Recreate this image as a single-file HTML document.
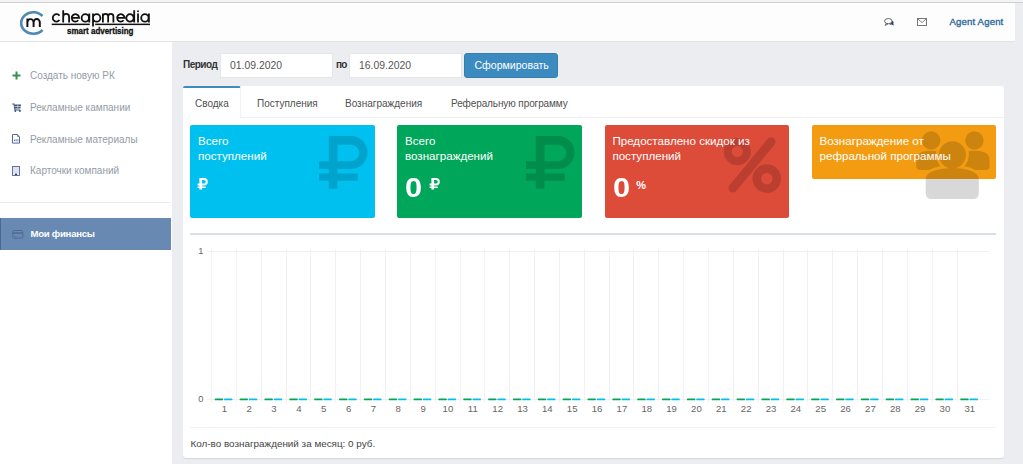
<!DOCTYPE html>
<html><head><meta charset="utf-8">
<style>
*{margin:0;padding:0;box-sizing:border-box}
html,body{width:1023px;height:464px;overflow:hidden;background:#ecedf0;font-family:"Liberation Sans",sans-serif;position:relative}
.a{position:absolute;white-space:nowrap;line-height:1}
#topstrip{position:absolute;left:0;top:0;width:1023px;height:3px;background:#f3f3f3;border-bottom:1px solid #d0d0d0}
#header{position:absolute;left:0;top:3px;width:1015px;height:39px;background:#fdfdfd;border-bottom:1px solid #e2e2e4}
#sidebar{position:absolute;left:0;top:42px;width:172px;height:422px;background:#fff}
.nav{font-size:10px;color:#939ca7}
#active{position:absolute;left:0;top:218px;width:171px;height:32px;background:#6889b2;border-left:1px solid #4a6892}
#sep{position:absolute;left:0;top:202px;width:171px;height:1px;background:#ececec}
.lbl{font-size:9.3px;font-weight:bold;color:#333}
.inp{position:absolute;top:53px;height:25px;background:#fff;border:1px solid #e6e6e6}
.inp span{position:absolute;left:9px;top:7.2px;font-size:10.4px;color:#555;line-height:1}
#btn{position:absolute;left:464px;top:53px;width:94px;height:25px;background:#3c8bc0;border-radius:3px;border:1px solid #367fa9}
#panel{position:absolute;left:183px;top:86px;width:821px;height:372px;background:#fff;border-radius:3px;box-shadow:0 1px 1px rgba(0,0,0,0.1)}
#tabbar{position:absolute;left:183px;top:86px;width:821px;height:32px;border-bottom:1px solid #f0f0f0}
#acttab{position:absolute;left:183px;top:86px;width:58px;height:32px;background:#fff;border-top:2px solid #3c8dbc;border-right:1px solid #f2f2f2;border-radius:2px 2px 0 0}
.tab{font-size:10px;color:#505050}
.box{position:absolute;top:125px;width:185px;height:93px;border-radius:2px;overflow:hidden}
.box .t{position:absolute;left:8px;top:8.1px;font-size:11.6px;line-height:15.3px;color:#fff;white-space:nowrap}
.box svg.ic{position:absolute;left:0;top:0}
.big{position:absolute;font-size:27px;font-weight:bold;color:#fff;line-height:1;transform:scaleX(1.12);transform-origin:0 0}
#chart{position:absolute;left:190px;top:233px;width:806px;height:194px;border-top:2px solid #d9dde4;border-radius:1px;box-shadow:0 1px 1px rgba(0,0,0,0.06)}
</style></head><body>
<div id="topstrip"></div>
<div id="header"></div>
<!-- logo -->
<svg class="a" style="left:0;top:0" width="170" height="42" viewBox="0 0 170 42">
  <path d="M42.5 16 A12.09 10.8 0 1 0 42.5 30" fill="none" stroke="#4f8ab3" stroke-width="2.6"/>
  <path d="M27.4 18.6 V27.1 M27.4 22.4 A3.1 3.3 0 0 1 33.6 22.4 V27.1 M33.6 22.4 A3.1 3.3 0 0 1 39.8 22.4 V27.1" fill="none" stroke="#111" stroke-width="1.95"/>
  <path d="M59.49 15.73 A3.7 3.7 0 1 0 59.49 20.07 M63.2 10.2 V22.4 M63.2 22.4 V17 A2.95 3.05 0 0 1 69.1 17 V22.4 M71.70 17.9 H79.10 A3.7 3.7 0 1 0 78.23 20.28 M81.60 17.9 A3.7 3.7 0 1 0 89.00 17.9 A3.7 3.7 0 1 0 81.60 17.9 M89.30 13.4 V22.4 M93 13.4 V26.6 M93 17.9 A3.7 3.7 0 1 1 100.40 17.9 A3.7 3.7 0 1 1 93 17.9 M102.9 13.4 V22.4 M102.9 16.3 A2.63 2.65 0 0 1 108.15 16.3 V22.4 M108.15 16.3 A2.63 2.65 0 0 1 113.4 16.3 V22.4 M117.10 17.9 H124.50 A3.7 3.7 0 1 0 123.63 20.28 M126.30 17.9 A3.7 3.7 0 1 0 133.70 17.9 A3.7 3.7 0 1 0 126.30 17.9 M134.2 10.2 V22.4 M138 13.4 V22.4 M141.20 17.9 A3.7 3.7 0 1 0 148.60 17.9 A3.7 3.7 0 1 0 141.20 17.9 M148.90 13.4 V22.4" fill="none" stroke="#111" stroke-width="1.8"/>
  <circle cx="138" cy="11.3" r="0.95" fill="#111"/>
  <rect x="51.7" y="23.6" width="38.1" height="1.5" fill="#111"/><rect x="95.2" y="23.6" width="54.8" height="1.5" fill="#111"/>
  <text x="67" y="33.6" font-family="Liberation Sans" font-weight="bold" font-size="8.3" fill="#111" stroke="#111" stroke-width="0.3" textLength="66.5" lengthAdjust="spacingAndGlyphs">smart advertising</text>
</svg>
<!-- header right -->
<svg class="a" style="left:884px;top:18px" width="10" height="8" viewBox="0 0 10 8">
  <ellipse cx="4.3" cy="3.1" rx="3.7" ry="2.6" fill="none" stroke="#5a5a5a" stroke-width="0.9"/>
  <path d="M2.2 5.4 L1.2 7.4 L4 6" fill="none" stroke="#5a5a5a" stroke-width="0.9"/>
  <path d="M8.3 2.8 C9.6 3.4 10 4.6 9.3 5.6 L9.8 7.6 L7.5 6.6 C6.8 6.8 5.6 6.6 5 6.1 C7 5.8 8.4 4.6 8.3 2.8 Z" fill="#2e3f5e"/>
</svg>
<svg class="a" style="left:917px;top:18px" width="10" height="8" viewBox="0 0 10 8">
  <rect x="0.5" y="0.5" width="9" height="7" fill="none" stroke="#777" stroke-width="1"/>
  <path d="M0.8 0.9 L5 4.6 L9.2 0.9" fill="none" stroke="#777" stroke-width="0.9"/>
</svg>
<div class="a" style="left:949.5px;top:16.6px;font-size:9.6px;color:#2d6b98;-webkit-text-stroke:0.35px #2d6b98;letter-spacing:0.15px">Agent Agent</div>

<!-- sidebar -->
<div id="sidebar"></div>
<svg class="a" style="left:12px;top:71px" width="9" height="9" viewBox="0 0 9 9"><path d="M4.5 0.5V8.5M0.5 4.5H8.5" stroke="#349147" stroke-width="2"/></svg>
<div class="a nav" style="left:30px;top:71px">Создать новую РК</div>
<svg class="a" style="left:12px;top:103px" width="10" height="9" viewBox="0 0 10 9">
  <path d="M0.2 1 H2 L3 7 H8.3" fill="none" stroke="#3b5579" stroke-width="1.1"/>
  <path d="M2.4 1.6 H9 L8.4 5.4 H3 Z" fill="#3b5579"/>
  <path d="M5.8 1.6 V5.4 M2.6 3.5 H8.9" stroke="#dfe6ee" stroke-width="0.7"/>
  <circle cx="3.3" cy="8" r="0.95" fill="#3b5579"/><circle cx="7.9" cy="8" r="0.95" fill="#3b5579"/>
</svg>
<div class="a nav" style="left:30px;top:102.5px">Рекламные кампании</div>
<svg class="a" style="left:12px;top:134px" width="8" height="10" viewBox="0 0 8 10">
  <path d="M0.5 0.5 H5.2 L7.5 2.8 V9.1 H0.5 Z" fill="none" stroke="#56679a" stroke-width="1"/>
  <path d="M5.2 0.5 V2.8 H7.5 Z" fill="#56679a"/>
  <path d="M1.8 6.3 L3.2 5.3 V7.3 Z" fill="#26456f"/>
  <rect x="3.6" y="5.2" width="3" height="2.2" fill="#9fb3cf"/>
</svg>
<div class="a nav" style="left:30px;top:134.5px">Рекламные материалы</div>
<svg class="a" style="left:12px;top:166px" width="8" height="10" viewBox="0 0 8 10">
  <rect x="0.5" y="0.5" width="7" height="9" fill="#dfe2ea" stroke="#6676a4" stroke-width="1"/>
  <rect x="1" y="7.6" width="6" height="1.4" fill="#fff"/>
  <ellipse cx="4" cy="8.4" rx="1.4" ry="0.8" fill="#2c4a7a"/>
</svg>
<div class="a nav" style="left:30px;top:166px">Карточки компаний</div>
<div id="sep"></div>
<div id="active"></div>
<svg class="a" style="left:12px;top:230px" width="12" height="9" viewBox="0 0 12 9">
  <rect x="0.8" y="0.5" width="10" height="7.6" rx="1" fill="none" stroke="#4d6b94" stroke-width="1"/>
  <rect x="0.8" y="2.3" width="10" height="1.5" fill="#4d6b94"/>
  <rect x="2" y="6" width="2.4" height="0.8" fill="#56759e"/>
</svg>
<div class="a" style="left:30.4px;top:228.9px;font-size:9.6px;font-weight:bold;color:#fff;letter-spacing:-0.25px">Мои финансы</div>

<!-- form -->
<div class="a lbl" style="left:183px;top:59.8px;font-size:10px;letter-spacing:-0.5px">Период</div>
<div class="inp" style="left:220px;width:113px"><span>01.09.2020</span></div>
<div class="a lbl" style="left:336px;top:59.8px;font-size:10px;letter-spacing:-0.9px">по</div>
<div class="inp" style="left:349px;width:113px"><span>16.09.2020</span></div>
<div id="btn"></div>
<div class="a" style="left:474.5px;top:59.5px;font-size:10.55px;color:#fff">Сформировать</div>

<!-- panel -->
<div id="panel"></div>
<div id="tabbar"></div>
<div id="acttab"></div>
<div class="a tab" style="left:195px;top:99px">Сводка</div>
<div class="a tab" style="left:257px;top:99px">Поступления</div>
<div class="a tab" style="left:345px;top:99px">Вознаграждения</div>
<div class="a tab" style="left:451px;top:99px;letter-spacing:-0.1px">Реферальную программу</div>

<!-- boxes -->
<div class="box" style="left:190px;background:#00c0ef">
  <svg class="ic" width="185" height="93" viewBox="0 0 185 93"><path fill="rgba(0,0,0,0.15)" d="M138.8 11 H161 A16.5 16.5 0 0 1 161 44 H147.5 V48.5 H167.8 V55.7 H147.5 V63.8 H138.8 V55.7 H129 V48.5 H138.8 V44 H129 V36.3 H138.8 Z M147.5 19.7 V36.3 H161 A8.3 8.3 0 0 0 161 19.7 Z"/></svg>
  <div class="t">Всего<br>поступлений</div>
  <svg class="ic" style="left:7.2px;top:52.5px" width="12" height="12" viewBox="0 0 12 12"><path fill="#fff" d="M2.4 0 H7 A3.75 3.75 0 0 1 7 7.5 H5.1 V8.4 H8.8 V10.1 H5.1 V11.6 H2.4 V10.1 H0.6 V8.4 H2.4 V7.5 H0.6 V5.6 H2.4 Z M5.1 1.9 V5.6 H6.9 A1.85 1.85 0 0 0 6.9 1.9 Z"/></svg>
</div>
<div class="box" style="left:397px;background:#00a65a">
  <svg class="ic" width="185" height="93" viewBox="0 0 185 93"><path fill="rgba(0,0,0,0.15)" d="M138.8 11 H161 A16.5 16.5 0 0 1 161 44 H147.5 V48.5 H167.8 V55.7 H147.5 V63.8 H138.8 V55.7 H129 V48.5 H138.8 V44 H129 V36.3 H138.8 Z M147.5 19.7 V36.3 H161 A8.3 8.3 0 0 0 161 19.7 Z"/></svg>
  <div class="t">Всего<br>вознаграждений</div>
  <div class="big" style="left:7.6px;top:48.8px;font-size:27.5px">0</div>
  <svg class="ic" style="left:31.8px;top:52.5px" width="12" height="12" viewBox="0 0 12 12"><path fill="#fff" d="M2.4 0 H7 A3.75 3.75 0 0 1 7 7.5 H5.1 V8.4 H8.8 V10.1 H5.1 V11.6 H2.4 V10.1 H0.6 V8.4 H2.4 V7.5 H0.6 V5.6 H2.4 Z M5.1 1.9 V5.6 H6.9 A1.85 1.85 0 0 0 6.9 1.9 Z"/></svg>
</div>
<div class="box" style="left:605px;width:184px;background:#dd4b39">
  <svg class="ic" width="185" height="93" viewBox="0 0 185 93">
    <g opacity="0.15"><g fill="none" stroke="#000">
      <circle cx="132.3" cy="26.6" r="9.6" stroke-width="8"/>
      <circle cx="161.8" cy="53.6" r="10" stroke-width="8.6"/>
    </g>
    <path d="M166 16.8 L128 63" stroke="#000" stroke-width="9" stroke-linecap="round"/></g>
  </svg>
  <div class="t" style="left:7.4px">Предоставлено скидок из<br>поступлений</div>
  <div class="big" style="left:7.6px;top:48.8px;font-size:27.5px">0</div>
  <div class="a" style="left:31.2px;top:55px;font-size:11px;font-weight:bold;color:#fff">%</div>
</div>
<div class="box" style="left:812px;width:184px;height:54px;background:#f39c12;overflow:visible"></div>
<svg class="a" style="left:812px;top:125px" width="184" height="80" viewBox="0 0 184 80">
  <defs>
    <mask id="m1"><rect width="184" height="80" fill="#fff"/>
      <circle cx="140.4" cy="29.8" r="16.4" fill="#000"/>
      <path d="M110.7 78 V54 C110.7 45.5 124 40.2 140.4 40.2 C156.5 40.2 169.8 45.5 169.8 54 V78 Z" fill="#000"/>
    </mask>
  </defs>
  <g opacity="0.15">
    <g mask="url(#m1)">
      <circle cx="119.2" cy="15.5" r="9.2"/>
      <circle cx="162.4" cy="15.5" r="9.2"/>
      <path d="M104.3 41 V35 C104.3 28 110 25.8 119.2 25.8 C128 25.8 133 28 133 35 V45 H108.3 A4 4 0 0 1 104.3 41 Z"/>
      <path d="M148 45 V35 C148 28 154 25.8 162.4 25.8 C171.5 25.8 177.5 28 177.5 35 V41 A4 4 0 0 1 173.5 45 Z"/>
    </g>
    <circle cx="140.4" cy="29.8" r="13.6"/>
    <path d="M113.7 68.5 V54 C113.7 47 126 43 140.4 43 C155 43 166.8 47 166.8 54 V68.5 A5.5 5.5 0 0 1 161.3 74 H119.2 A5.5 5.5 0 0 1 113.7 68.5 Z"/>
  </g>
</svg>
<div class="a" style="left:819.5px;top:133.1px;font-size:11.6px;line-height:15.3px;color:#fff">Вознаграждение от<br>рефральной программы</div>

<!-- chart -->
<div id="chart"></div>
<svg id="plot" class="a" style="left:183px;top:240px" width="821" height="180" viewBox="183 240 821 180"><g stroke="#f1f1f1" stroke-width="1"><line x1="211.5" y1="249" x2="211.5" y2="402.5"/><line x1="236.5" y1="249" x2="236.5" y2="402.5"/><line x1="261.5" y1="249" x2="261.5" y2="402.5"/><line x1="286.5" y1="249" x2="286.5" y2="402.5"/><line x1="310.5" y1="249" x2="310.5" y2="402.5"/><line x1="335.5" y1="249" x2="335.5" y2="402.5"/><line x1="360.5" y1="249" x2="360.5" y2="402.5"/><line x1="385.5" y1="249" x2="385.5" y2="402.5"/><line x1="410.5" y1="249" x2="410.5" y2="402.5"/><line x1="435.5" y1="249" x2="435.5" y2="402.5"/><line x1="460.5" y1="249" x2="460.5" y2="402.5"/><line x1="484.5" y1="249" x2="484.5" y2="402.5"/><line x1="509.5" y1="249" x2="509.5" y2="402.5"/><line x1="534.5" y1="249" x2="534.5" y2="402.5"/><line x1="559.5" y1="249" x2="559.5" y2="402.5"/><line x1="584.5" y1="249" x2="584.5" y2="402.5"/><line x1="609.5" y1="249" x2="609.5" y2="402.5"/><line x1="633.5" y1="249" x2="633.5" y2="402.5"/><line x1="658.5" y1="249" x2="658.5" y2="402.5"/><line x1="683.5" y1="249" x2="683.5" y2="402.5"/><line x1="708.5" y1="249" x2="708.5" y2="402.5"/><line x1="733.5" y1="249" x2="733.5" y2="402.5"/><line x1="758.5" y1="249" x2="758.5" y2="402.5"/><line x1="783.5" y1="249" x2="783.5" y2="402.5"/><line x1="807.5" y1="249" x2="807.5" y2="402.5"/><line x1="832.5" y1="249" x2="832.5" y2="402.5"/><line x1="857.5" y1="249" x2="857.5" y2="402.5"/><line x1="882.5" y1="249" x2="882.5" y2="402.5"/><line x1="907.5" y1="249" x2="907.5" y2="402.5"/><line x1="932.5" y1="249" x2="932.5" y2="402.5"/><line x1="957.5" y1="249" x2="957.5" y2="402.5"/><line x1="207" y1="251.5" x2="989" y2="251.5"/><line x1="207" y1="399.5" x2="989" y2="399.5"/></g><g stroke-width="1.8" stroke-linecap="round"><line x1="215.60" y1="399.4" x2="222.30" y2="399.4" stroke="#00a65a"/><line x1="224.90" y1="399.4" x2="231.60" y2="399.4" stroke="#00c0ef"/><line x1="240.45" y1="399.4" x2="247.15" y2="399.4" stroke="#00a65a"/><line x1="249.75" y1="399.4" x2="256.45" y2="399.4" stroke="#00c0ef"/><line x1="265.30" y1="399.4" x2="272.00" y2="399.4" stroke="#00a65a"/><line x1="274.60" y1="399.4" x2="281.30" y2="399.4" stroke="#00c0ef"/><line x1="290.15" y1="399.4" x2="296.85" y2="399.4" stroke="#00a65a"/><line x1="299.45" y1="399.4" x2="306.15" y2="399.4" stroke="#00c0ef"/><line x1="315.00" y1="399.4" x2="321.70" y2="399.4" stroke="#00a65a"/><line x1="324.30" y1="399.4" x2="331.00" y2="399.4" stroke="#00c0ef"/><line x1="339.85" y1="399.4" x2="346.55" y2="399.4" stroke="#00a65a"/><line x1="349.15" y1="399.4" x2="355.85" y2="399.4" stroke="#00c0ef"/><line x1="364.70" y1="399.4" x2="371.40" y2="399.4" stroke="#00a65a"/><line x1="374.00" y1="399.4" x2="380.70" y2="399.4" stroke="#00c0ef"/><line x1="389.55" y1="399.4" x2="396.25" y2="399.4" stroke="#00a65a"/><line x1="398.85" y1="399.4" x2="405.55" y2="399.4" stroke="#00c0ef"/><line x1="414.40" y1="399.4" x2="421.10" y2="399.4" stroke="#00a65a"/><line x1="423.70" y1="399.4" x2="430.40" y2="399.4" stroke="#00c0ef"/><line x1="439.25" y1="399.4" x2="445.95" y2="399.4" stroke="#00a65a"/><line x1="448.55" y1="399.4" x2="455.25" y2="399.4" stroke="#00c0ef"/><line x1="464.10" y1="399.4" x2="470.80" y2="399.4" stroke="#00a65a"/><line x1="473.40" y1="399.4" x2="480.10" y2="399.4" stroke="#00c0ef"/><line x1="488.95" y1="399.4" x2="495.65" y2="399.4" stroke="#00a65a"/><line x1="498.25" y1="399.4" x2="504.95" y2="399.4" stroke="#00c0ef"/><line x1="513.80" y1="399.4" x2="520.50" y2="399.4" stroke="#00a65a"/><line x1="523.10" y1="399.4" x2="529.80" y2="399.4" stroke="#00c0ef"/><line x1="538.65" y1="399.4" x2="545.35" y2="399.4" stroke="#00a65a"/><line x1="547.95" y1="399.4" x2="554.65" y2="399.4" stroke="#00c0ef"/><line x1="563.50" y1="399.4" x2="570.20" y2="399.4" stroke="#00a65a"/><line x1="572.80" y1="399.4" x2="579.50" y2="399.4" stroke="#00c0ef"/><line x1="588.35" y1="399.4" x2="595.05" y2="399.4" stroke="#00a65a"/><line x1="597.65" y1="399.4" x2="604.35" y2="399.4" stroke="#00c0ef"/><line x1="613.20" y1="399.4" x2="619.90" y2="399.4" stroke="#00a65a"/><line x1="622.50" y1="399.4" x2="629.20" y2="399.4" stroke="#00c0ef"/><line x1="638.05" y1="399.4" x2="644.75" y2="399.4" stroke="#00a65a"/><line x1="647.35" y1="399.4" x2="654.05" y2="399.4" stroke="#00c0ef"/><line x1="662.90" y1="399.4" x2="669.60" y2="399.4" stroke="#00a65a"/><line x1="672.20" y1="399.4" x2="678.90" y2="399.4" stroke="#00c0ef"/><line x1="687.75" y1="399.4" x2="694.45" y2="399.4" stroke="#00a65a"/><line x1="697.05" y1="399.4" x2="703.75" y2="399.4" stroke="#00c0ef"/><line x1="712.60" y1="399.4" x2="719.30" y2="399.4" stroke="#00a65a"/><line x1="721.90" y1="399.4" x2="728.60" y2="399.4" stroke="#00c0ef"/><line x1="737.45" y1="399.4" x2="744.15" y2="399.4" stroke="#00a65a"/><line x1="746.75" y1="399.4" x2="753.45" y2="399.4" stroke="#00c0ef"/><line x1="762.30" y1="399.4" x2="769.00" y2="399.4" stroke="#00a65a"/><line x1="771.60" y1="399.4" x2="778.30" y2="399.4" stroke="#00c0ef"/><line x1="787.15" y1="399.4" x2="793.85" y2="399.4" stroke="#00a65a"/><line x1="796.45" y1="399.4" x2="803.15" y2="399.4" stroke="#00c0ef"/><line x1="812.00" y1="399.4" x2="818.70" y2="399.4" stroke="#00a65a"/><line x1="821.30" y1="399.4" x2="828.00" y2="399.4" stroke="#00c0ef"/><line x1="836.85" y1="399.4" x2="843.55" y2="399.4" stroke="#00a65a"/><line x1="846.15" y1="399.4" x2="852.85" y2="399.4" stroke="#00c0ef"/><line x1="861.70" y1="399.4" x2="868.40" y2="399.4" stroke="#00a65a"/><line x1="871.00" y1="399.4" x2="877.70" y2="399.4" stroke="#00c0ef"/><line x1="886.55" y1="399.4" x2="893.25" y2="399.4" stroke="#00a65a"/><line x1="895.85" y1="399.4" x2="902.55" y2="399.4" stroke="#00c0ef"/><line x1="911.40" y1="399.4" x2="918.10" y2="399.4" stroke="#00a65a"/><line x1="920.70" y1="399.4" x2="927.40" y2="399.4" stroke="#00c0ef"/><line x1="936.25" y1="399.4" x2="942.95" y2="399.4" stroke="#00a65a"/><line x1="945.55" y1="399.4" x2="952.25" y2="399.4" stroke="#00c0ef"/><line x1="961.10" y1="399.4" x2="967.80" y2="399.4" stroke="#00a65a"/><line x1="970.40" y1="399.4" x2="977.10" y2="399.4" stroke="#00c0ef"/></g><g font-family="Liberation Sans" font-size="9.6" fill="#666" text-anchor="middle"><text x="224.30" y="411.7">1</text><text x="249.15" y="411.7">2</text><text x="274.00" y="411.7">3</text><text x="298.85" y="411.7">4</text><text x="323.70" y="411.7">5</text><text x="348.55" y="411.7">6</text><text x="373.40" y="411.7">7</text><text x="398.25" y="411.7">8</text><text x="423.10" y="411.7">9</text><text x="447.95" y="411.7">10</text><text x="472.80" y="411.7">11</text><text x="497.65" y="411.7">12</text><text x="522.50" y="411.7">13</text><text x="547.35" y="411.7">14</text><text x="572.20" y="411.7">15</text><text x="597.05" y="411.7">16</text><text x="621.90" y="411.7">17</text><text x="646.75" y="411.7">18</text><text x="671.60" y="411.7">19</text><text x="696.45" y="411.7">20</text><text x="721.30" y="411.7">21</text><text x="746.15" y="411.7">22</text><text x="771.00" y="411.7">23</text><text x="795.85" y="411.7">24</text><text x="820.70" y="411.7">25</text><text x="845.55" y="411.7">26</text><text x="870.40" y="411.7">27</text><text x="895.25" y="411.7">28</text><text x="920.10" y="411.7">29</text><text x="944.95" y="411.7">30</text><text x="969.80" y="411.7">31</text></g><g font-family="Liberation Sans" font-size="9.3" fill="#666" text-anchor="end"><text x="203.5" y="254">1</text><text x="203.5" y="401.7">0</text></g></svg>

<div class="a" style="left:190.5px;top:438.8px;font-size:9.9px;color:#444">Кол-во вознаграждений за месяц: 0 руб.</div>
</body></html>
